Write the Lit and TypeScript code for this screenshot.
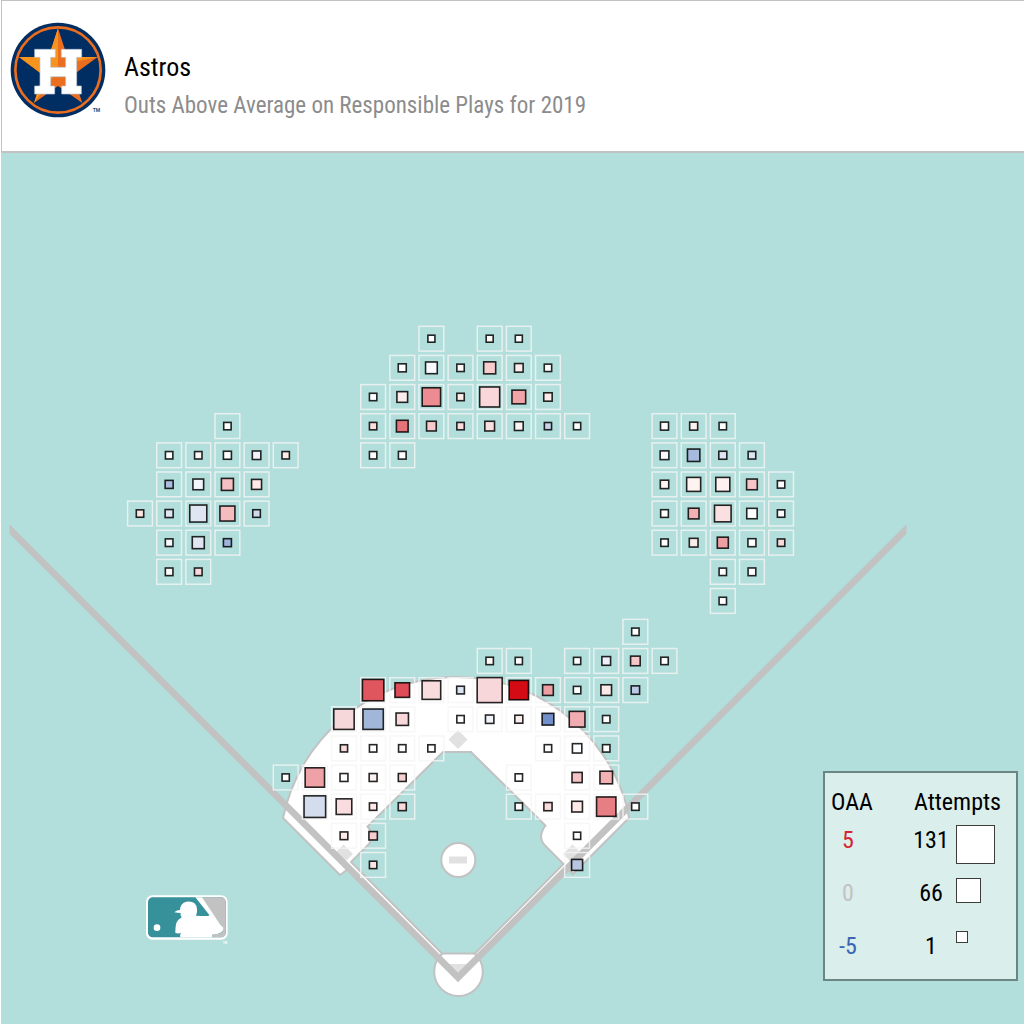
import { LitElement, html, svg, css } from "lit";
import { customElement } from "lit/decorators.js";

type Mark = [column: number, size: number, color: string];
type Row = Mark[];

const W = "#ffffff";
const PITCH = 29.14;
const FIRST_COLUMN = 140;

// Each zone starts at its own vertical centre; rows follow at a constant pitch.
const OUTFIELD: Row[] = [
  [[10, 7, W], [12, 7, "#fff8f7"], [13, 7, W]],
  [[9, 8, W], [10, 11.7, "#f8fbfe"], [11, 7.4, "#fff9f8"], [12, 12, "#f6cccf"], [13, 8.6, "#fdecec"], [14, 7.4, W]],
  [[8, 7.4, W], [9, 10.7, "#fcecec"], [10, 18.4, "#ec8c92"], [11, 7.4, "#fdecea"], [12, 20, "#f8d6da"], [13, 13.7, "#f1a4a8"], [14, 8.4, "#fdeae9"]],
  [[3, 7.4, W], [8, 7.4, "#fce0e0"], [9, 11.7, "#e5737a"], [10, 9.7, "#f7cbcd"], [11, 7.4, "#fbdcdc"], [12, 9.7, "#fadfe0"], [13, 8.7, "#fef3f3"], [14, 7.2, "#c9d3ea"], [15, 7.2, W], [18, 8, W], [19, 8, "#fef2f1"], [20, 7.4, W]],
  [[1, 7.4, W], [2, 7.4, "#fff8f7"], [3, 8, W], [4, 8.5, "#f3f5fb"], [5, 7.4, "#feebe9"], [8, 7.4, W], [9, 7.7, W], [18, 8.7, "#fbf9fc"], [19, 12.4, "#a7badd"], [20, 8, "#e0e4f2"], [21, 7.6, "#dde5f2"]],
  [[1, 8, "#aebcdf"], [2, 10.7, "#f2f5fb"], [3, 12, "#f5bfc3"], [4, 10, "#fde9e8"], [18, 8.4, "#fef4f4"], [19, 14, "#fef3f1"], [20, 14, "#fef0ef"], [21, 10.7, "#f7c4c8"], [22, 7.4, W]],
  [[0, 7.4, "#fde5e3"], [1, 8, "#e0e6f2"], [2, 17, "#dfe5f1"], [3, 15, "#f4bcbf"], [4, 7.6, "#d0daeb"], [18, 7.7, W], [19, 10.7, "#f3b0b4"], [20, 16.6, "#fae0e0"], [21, 10.4, W], [22, 7.4, W]],
  [[1, 7.6, "#f7f9fc"], [2, 12, "#dfe6f2"], [3, 8, "#9fb4dc"], [18, 7.4, W], [19, 8.7, "#fceae9"], [20, 11, "#ee9fa4"], [21, 8, W], [22, 7.4, "#f8dcdc"]],
  [[1, 7.6, "#fffafa"], [2, 7.6, "#fbd8db"], [20, 7.4, W], [21, 7.7, W]],
  [[20, 7.4, W]],
];

const INFIELD: Row[] = [
  [[17, 7.4, W]],
  [[12, 7.4, "#fff8f7"], [13, 7.2, W], [15, 7.2, W], [16, 8.7, "#eeeffa"], [17, 9.6, "#f7c6c9"], [18, 7.4, W]],
  [[8, 21.4, "#e0565f"], [9, 14.6, "#de4d57"], [10, 18.6, "#f9dcde"], [11, 7.7, "#dce4f2"], [12, 25, "#f7d7da"], [13, 19.4, "#d40b15"], [14, 10.7, "#ee9fa4"], [15, 7.4, W], [16, 10.6, "#fceae9"], [17, 8.4, "#bccae5"]],
  [[7, 20.4, "#f6d8db"], [8, 20.4, "#a2b6da"], [9, 12.4, "#f8d8da"], [11, 7.4, W], [12, 8.4, "#f0f4fa"], [13, 8, "#fceeed"], [14, 11.7, "#718fc9"], [15, 15.7, "#f1acb1"], [16, 7.4, W]],
  [[7, 7.2, "#f9dcdc"], [8, 7.4, W], [9, 7.4, W], [10, 7.2, W], [14, 7.4, W], [15, 9.4, "#fcfdff"], [16, 7.4, W]],
  [[5, 7.2, W], [6, 19.4, "#eea1a6"], [7, 7.9, W], [8, 7.9, "#fdf0f0"], [9, 7.9, "#f8d2d3"], [13, 7.4, W], [15, 10.2, "#f5c3c5"], [16, 12.6, "#f3b1b4"]],
  [[6, 21.6, "#d3dded"], [7, 15.6, "#f9dcdf"], [8, 7.4, "#fde8e8"], [9, 8, "#f8dcdd"], [13, 7.4, W], [14, 8.2, "#fadbdb"], [15, 10.7, "#fdeae8"], [16, 19.4, "#e67e84"], [17, 7.4, W]],
  [[7, 7.7, "#fdecea"], [8, 8.4, "#f7ccd1"], [15, 7.2, W]],
  [[8, 7.4, "#fce7e7"], [15, 11, "#b9c7e3"]],
];

@customElement("team-logo")
class TeamLogo extends LitElement {
  static styles = css`
    :host { display: block; flex: none; }
    .logo { display: block; width: 96px; height: 96px; }
    .tm { font: bold 15px Roboto, "Liberation Sans", sans-serif; fill: #2b4f7e; }
  `;
  render() {
    return html`<svg class="logo" viewBox="29 66 288 288" role="img" aria-label="Astros logo">
      <circle cx="173" cy="210" r="142" fill="#002d62" />
      <circle cx="173" cy="210" r="128" fill="none" stroke="#eb6e1f" stroke-width="8" />
      <path fill="#eb6e1f" d="M173 85 201 171 292 171 218 225 246 309 173 258 101 309 128 225 56 171 145 171Z" />
      <path fill="#f7941d" d="M173 85 173 210 145 171ZM56 171 145 171 173 210 128 225ZM101 309 128 225 173 210Z" />
      <path fill="#f7941d" d="M201 171 292 171 215 187Z" />
      <path fill="#ffffff" stroke="#b9c6d6" stroke-width="2" stroke-linejoin="round"
        d="M103 148H165V172H151V202H196V172H183V148H244V172H229V258H243V282H184V258H196V230H151V258H163V282H103V258H119V172H103Z" />
      <text class="tm" x="277" y="335">TM</text>
    </svg>`;
  }
}

@customElement("field-chart")
class FieldChart extends LitElement {
  static styles = css`
    :host { display: block; }
    .field { display: block; width: 100%; height: auto; background: #b2dfdb; }
    .line { fill: none; stroke: #c2c2c2; stroke-width: 6.8; }
    .dirt { fill: #ffffff; stroke: #c2c2c2; stroke-width: 2; }
    .grass { fill: #b2dfdb; stroke: #c2c2c2; stroke-width: 2; }
    .base { fill: #e1e1e1; }
    .cell { fill: none; stroke: #f5f5f5; stroke-opacity: 0.8; stroke-width: 1.5; }
    .mark { stroke: #000000; stroke-opacity: 0.85; stroke-width: 1.6; }
    .tm { font: bold 8px Roboto, "Liberation Sans", sans-serif; fill: #ffffff; }
  `;

  private zone(rows: Row[], top: number) {
    return rows.map((row, r) =>
      row.map(([column, size, color]) => {
        const x = FIRST_COLUMN + column * PITCH;
        const y = top + r * PITCH;
        return svg`
          <rect class="cell" x=${x - 12.4} y=${y - 12.4} width="24.8" height="24.8" />
          <rect class="mark" x=${x - size / 2} y=${y - size / 2} width=${size} height=${size} fill=${color} />`;
      })
    );
  }

  render() {
    return html`<svg class="field" viewBox="1 153 1023 871" role="img" aria-label="Outs above average by fielding position">
      <path class="dirt" d="M340 875 283 818A177 177 0 0 1 627 807L629 818 573 874 568 869 458 979 348 869Z" />
      <circle class="dirt" cx="458.5" cy="971.7" r="24.3" />
      <path class="grass" d="M443 752H471L545.5 825.5Q537 837 545 845.5L563.5 864 475 953.5H442L351 862 369 844Q375 835 367.5 826.5Z" />
      <circle class="dirt" cx="458.3" cy="860" r="17" />
      <path class="base" d="M449 856.5h18v7h-18ZM458 730l9.5 9.5-9.5 9.5-9.5-9.5ZM343.5 844.5l9.5 9.5-9.5 9.5-9.5-9.5ZM572.5 844.5l9.5 9.5-9.5 9.5-9.5-9.5ZM449 964h18v5l-9 9-9-9Z" />
      <clipPath id="fence"><path d="M9.5 500H906.5V1000H9.5Z" /></clipPath>
      <path class="line" clip-path="url(#fence)" d="M0 519.5 458 977.5 916 519.5" />
      ${this.zone(OUTFIELD, 338.7)} ${this.zone(INFIELD, 631.8)}
      <g transform="translate(130 880) scale(0.33333)">
        <rect x="48" y="46" width="245" height="133" rx="19" fill="#ffffff" />
        <rect x="54" y="52" width="233" height="120" rx="14" fill="#37919a" />
        <path fill="#c2c2c2" d="M214 52H273Q287 52 287 66V158Q287 172 273 172H249Q244 163 250 162H264Q270 162 279 152Q282 143 274 136Q267 132 263 124Z" />
        <path fill="#ffffff" d="M196 52H216L265 125Q269 133 276 138Q284 146 277 154Q269 163 260 162H250Q243 166 249 172H151Q149 163 153 158Q147 162 136 159Q136 139 139 129Q143 119 155 112Q149 107 152 99Q143 99 133 97Q140 90 150 90Q151 69 169 65Q199 62 201 87V96L198 107Q218 109 235 108L238 105Z" />
        <circle cx="81" cy="143" r="10" fill="#ffffff" />
        <text class="tm" x="279" y="192">TM</text>
      </g>
    </svg>`;
  }
}

@customElement("chart-legend")
class ChartLegend extends LitElement {
  static styles = css`
    :host { display: block; background: #daeeec; border: 2px solid #6b8583; }
    .key { border-collapse: collapse; table-layout: fixed; width: 191px; margin: 14px 0 0; line-height: 30px; font-size: 24px; color: #000000; }
    th, td { padding: 0; font-weight: 400; text-align: center; vertical-align: top; }
    .head th { height: 38px; text-align: left; }
    .head .oaa { padding-left: 6px; }
    .head .tries { padding-left: 8px; }
    .row td { height: 53px; }
    .row:last-child td { height: 48px; }
    .c1 { width: 46px; }
    .c2 { width: 35px; }
    .c3 { width: 50px; }
    .high { color: #d8232f; }
    .zero { color: #c2c2c2; }
    .low { color: #3a66b1; }
    .swatch { display: block; box-sizing: border-box; background: #ffffff; border: 1px solid #3c3c3c; }
  `;
  render() {
    const rows: [string, string, string, number][] = [
      ["5", "high", "131", 39],
      ["0", "zero", "66", 25],
      ["-5", "low", "1", 12],
    ];
    return html`<table class="key">
      <colgroup><col class="c1" /><col class="c2" /><col class="c3" /><col /></colgroup>
      <thead>
        <tr class="head"><th class="oaa" colspan="2">OAA</th><th class="tries" colspan="2">Attempts</th></tr>
      </thead>
      <tbody>
        ${rows.map(
          ([oaa, tone, attempts, size]) => html`<tr class="row">
            <td class=${tone}>${oaa}</td><td></td><td>${attempts}</td>
            <td><span class="swatch" style="width:${size}px;height:${size}px"></span></td>
          </tr>`
        )}
      </tbody>
    </table>`;
  }
}

@customElement("app-root")
class AppRoot extends LitElement {
  static styles = css`
    :host { display: block; padding-left: 1px; background: #ffffff; font-family: "Roboto Condensed", Roboto, "Liberation Sans", sans-serif; }
    .header { display: flex; align-items: flex-start; gap: 18px; box-sizing: border-box; min-height: 153px; padding: 21px 8px 20px; border: solid #c2c2c2; border-width: 1px 0 2px 1px; }
    .titles { padding-top: 28px; }
    .team { margin: 0; font-size: 26px; line-height: 34px; font-weight: 450; color: #000000; }
    .subtitle { margin: 6px 0 0; font-size: 23px; line-height: 32px; font-weight: 400; color: #8c8c8c; }
    .stage { position: relative; }
    .legend { position: absolute; right: 6px; bottom: 43px; }
  `;
  render() {
    return html`
      <header class="header">
        <team-logo></team-logo>
        <div class="titles">
          <h1 class="team">Astros</h1>
          <p class="subtitle">Outs Above Average on Responsible Plays for 2019</p>
        </div>
      </header>
      <main class="stage">
        <field-chart></field-chart>
        <chart-legend class="legend"></chart-legend>
      </main>
    `;
  }
}
